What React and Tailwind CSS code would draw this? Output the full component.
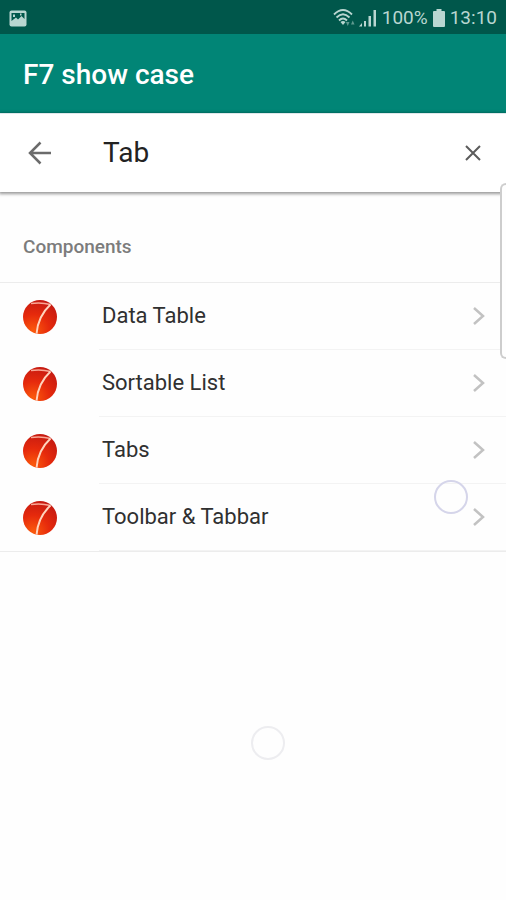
import React from "react";

const items = ["Data Table", "Sortable List", "Tabs", "Toolbar & Tabbar"];

function StatusBar() {
  return (
    <div className="flex h-[34px] items-center bg-[#00574b] px-[9px] pt-0.5 text-[#b9d6d1]">
      <svg className="h-[17px] w-[18px]" viewBox="0 0 18 17" aria-hidden="true">
        <rect x="0.5" y="0.5" width="17" height="16" rx="2" fill="currentColor" />
        <path d="M2.500 3h13v6L12.500 6 9 9.500 7 7.500 2.500 11z" fill="#00574b" />
        <path d="M4 4.500h2v2.500H4zM11 3.500h1.500v2H11z" fill="currentColor" />
      </svg>
      <div className="ml-auto flex items-center">
        <svg className="h-5 w-[22px]" viewBox="0 0 22 20" fill="none" stroke="currentColor" strokeWidth="1.800" aria-hidden="true">
          <path d="M1 6.500Q10 -2.500 19 6.500M3.500 9.500Q10 3 16.500 9.500M6 12.500Q10 8.500 14 12.500" />
          <path d="M7.500 14Q10 12 12.500 14L10 17z" fill="currentColor" stroke="none" />
          <path d="M13 14h3.500l-1.750 4zM18 16.500h3.500l-1.750-4z" fill="#5f9a90" stroke="none" />
        </svg>
        <svg className="ml-[4px] h-[18px] w-[18px]" viewBox="0 0 18 18" fill="currentColor" aria-hidden="true">
          <path d="M0 17.500L3 14v3.500zM5 12h2v5.500H5zM9.500 7h2.500v10.500H9.500zM14.500 1H17v16.500h-2.500z" />
        </svg>
        <span className="ml-[5px] text-[19px] leading-6">100%</span>
        <svg className="ml-[5px] h-[18px] w-3" viewBox="0 0 12 18" fill="currentColor" aria-hidden="true">
          <path d="M3.500 0h5v2H11a1 1 0 0 1 1 1v14a1 1 0 0 1-1 1H1a1 1 0 0 1-1-1V3a1 1 0 0 1 1-1h2.500z" />
        </svg>
        <span className="ml-[5px] text-[19px] leading-6">13:10</span>
      </div>
    </div>
  );
}

function Logo() {
  return (
    <svg className="h-[34px] w-[34px] shrink-0" viewBox="0 0 34 34" aria-hidden="true">
      <defs>
        <radialGradient id="ball" cx="0.3" cy="0.9" r="0.95">
          <stop offset="0" stopColor="#fb5a0c" />
          <stop offset="0.5" stopColor="#e62a0c" />
          <stop offset="1" stopColor="#c41a12" />
        </radialGradient>
        <clipPath id="disc">
          <circle cx="17" cy="17" r="17" />
        </clipPath>
      </defs>
      <g clipPath="url(#disc)">
        <rect width="34" height="34" fill="url(#ball)" />
        <path d="M8 3.500Q18 2 27.500 4.500" fill="none" stroke="#f9a896" strokeWidth="1.500" />
        <path d="M27.500 4.500C20.500 11 14.500 20 13.500 34" fill="none" stroke="#ffd3bd" strokeWidth="2" />
      </g>
    </svg>
  );
}

export default function App() {
  return (
    <div className="relative min-h-screen overflow-hidden bg-[#fefefe] font-['Roboto',sans-serif]">
      <StatusBar />
      <header className="flex h-[79px] items-center bg-[#018576] px-[23px] pt-0.5">
        <h1 className="text-[28px] leading-8 font-medium text-white">F7 show case</h1>
      </header>
      <form
        className="flex h-[79px] items-center border-t border-[#dfe7ea] bg-white pr-[24px] pl-[28px] shadow-[0_1px_3px_1px_rgba(0,0,0,0.4)]"
        onSubmit={(e) => e.preventDefault()}
      >
        <button type="button" aria-label="Back" className="text-[#6b6b6b]">
          <svg className="h-6 w-6" viewBox="0 0 24 24" fill="none" stroke="currentColor" strokeWidth="2.500">
            <path d="M12.500 1.500L2 12L12.500 22.500M2 12H23" />
          </svg>
        </button>
        <input
          type="text"
          aria-label="Search"
          defaultValue="Tab"
          className="ml-[51px] min-w-0 flex-1 bg-transparent text-[28px] leading-8 text-[#222] outline-none"
        />
        <button type="button" aria-label="Clear" className="text-[#5c5c5c]">
          <svg className="h-[18px] w-[18px]" viewBox="0 0 18 18" fill="none" stroke="currentColor" strokeWidth="2">
            <path d="M2 2L16 16M16 2L2 16" />
          </svg>
        </button>
      </form>
      <main>
        <h2 className="px-[23px] pt-[43px] pb-[23px] text-[19px] leading-6 font-medium text-[#7c7c7c]">Components</h2>
        <ul className="border-y border-[#ececec]">
          {items.map((item) => (
            <li key={item}>
              <a href="#" className="flex h-[67px] items-center pl-[23px]">
                <Logo />
                <span className="ml-[42px] flex h-full flex-1 items-center justify-between border-b border-[#f3f3f3] pr-[21px] pl-[3px]">
                  <span className="text-[22px] leading-8 text-[#303030]">{item}</span>
                  <svg className="h-5 w-[14px]" viewBox="0 0 14 20" fill="none" stroke="#c2c2c2" strokeWidth="2.500" aria-hidden="true">
                    <path d="M3 2L12 10L3 18" />
                  </svg>
                </span>
              </a>
            </li>
          ))}
        </ul>
      </main>
      <div className="absolute top-[183px] right-0 h-[176px] w-[6px] rounded-l-lg border-2 border-r-0 border-[#cdcdcd] bg-[#fefefe]" />
      <div className="absolute top-[480px] right-[38px] h-[34px] w-[34px] rounded-full border-2 border-[#d5d5ea]" />
      <div className="absolute top-[726px] left-[251px] h-[34px] w-[34px] rounded-full border-2 border-[#ededf0]" />
    </div>
  );
}
